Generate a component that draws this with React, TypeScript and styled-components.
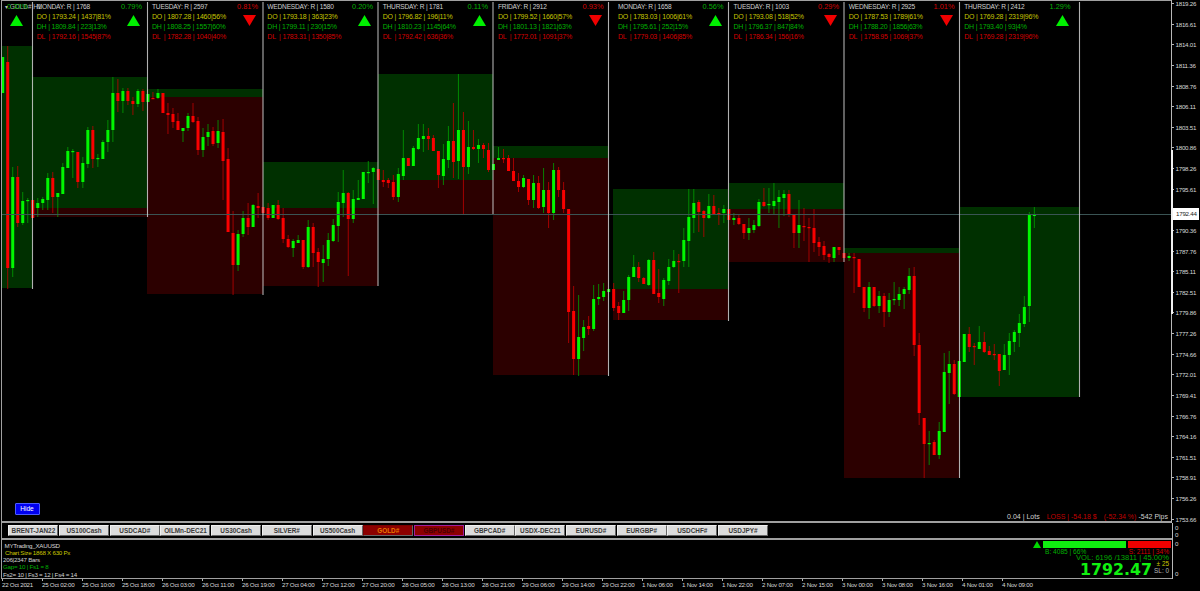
import React from 'react';
import styled, { createGlobalStyle } from 'styled-components';

type Bar = [string, number, number, number, number]; // dir, high, bodyTop, bodyBottom, low

const GlobalStyle = createGlobalStyle`
  html, body {
    margin: 0;
    padding: 0;
    background: #000;
    overflow: hidden;
  }
`;

const Root = styled.div`
  width: 1200px;
  height: 591px;
  background: #000;
  display: flex;
  flex-direction: column;
  color: #ddd;
  font-family: 'Liberation Sans', Arial, sans-serif;
  font-size: 6.2px;
  letter-spacing: -0.25px;
`;

const Pane = styled.div<{ $h: number }>`
  display: flex;
  height: ${(p) => p.$h}px;
  flex: none;
`;

const PaneBody = styled.div<{ $bottom?: number }>`
  flex: 1;
  margin-left: 1px;
  border-left: 1px solid #a0a0a0;
  border-bottom: ${(p) => p.$bottom ?? 2}px solid #a0a0a0;
  min-width: 0;
`;

const ChartBody = styled(PaneBody)`
  position: relative;
  border-top: 1px solid #a0a0a0;
`;

const PriceAxis = styled.div`
  width: 28px;
  flex: none;
  border-left: 1px solid #b8b8b8;
  display: flex;
  flex-direction: column;
  justify-content: space-between;
  position: relative;
`;

const Tick = styled.div`
  position: relative;
  height: 7px;
  line-height: 7px;
  padding-left: 3.5px;
  color: #d8d8d8;
  white-space: nowrap;
  &::before {
    content: '';
    position: absolute;
    left: 0;
    top: 3px;
    width: 2px;
    height: 1px;
    background: #b8b8b8;
  }
`;

const ScrollMark = styled.div`
  position: absolute;
  left: -1px;
  top: 150px;
  width: 2px;
  height: 164px;
  background: #f0f0f0;
`;

const BidLabel = styled.div`
  position: absolute;
  left: 1px;
  top: 208px;
  width: 26px;
  height: 12px;
  line-height: 12px;
  padding-left: 3px;
  box-sizing: border-box;
  background: #fff;
  color: #222;
`;

const ChartSvg = styled.svg`
  display: block;
`;

const HeaderRow = styled.div`
  position: absolute;
  left: 30px;
  top: 0;
  display: flex;
`;

const DayInfo = styled.div<{ $w: number; $pl?: number; $pr?: number }>`
  width: ${(p) => p.$w}px;
  box-sizing: border-box;
  padding-left: ${(p) => p.$pl ?? 5}px;
  padding-right: ${(p) => p.$pr ?? 5}px;
  display: flex;
  justify-content: space-between;
`;

const DayLines = styled.div`
  display: flex;
  flex-direction: column;
`;

const DayTitle = styled.div`
  font-size: 6.6px;
  letter-spacing: -0.2px;
  line-height: 11px;
  color: #d0d0d0;
  white-space: pre;
`;

const DayLine = styled.div<{ $tone: 'o' | 'h' | 'l' }>`
  font-size: 7px;
  letter-spacing: -0.2px;
  line-height: ${(p) => (p.$tone === 'l' ? 9 : 10)}px;
  white-space: pre;
  color: ${(p) => (p.$tone === 'o' ? '#c4c400' : p.$tone === 'h' ? '#00b000' : '#d40000')};
`;

const DaySide = styled.div`
  display: flex;
  flex-direction: column;
  align-items: flex-end;
`;

const Pct = styled.div<{ $up: boolean }>`
  font-size: 7.4px;
  letter-spacing: 0;
  line-height: 12px;
  color: ${(p) => (p.$up ? '#00b000' : '#d40000')};
`;

const ArrowSvg = styled.svg`
  display: block;
  margin-top: 2px;
  margin-right: 2px;
`;

const SymbolTag = styled.div`
  position: absolute;
  left: 3px;
  top: 1px;
  font-size: 6.4px;
  letter-spacing: 0;
  line-height: 10px;
  color: #bbb;
  white-space: pre;
`;

const FirstDay = styled.div`
  position: absolute;
  left: 5px;
  top: 0;
  display: flex;
  flex-direction: column;
  align-items: center;
`;

const HideButton = styled.button`
  position: absolute;
  left: 12.5px;
  top: 501.5px;
  width: 25px;
  height: 12.5px;
  padding: 0;
  background: #0000f0;
  border: 1px solid #4a5cff;
  border-radius: 1px;
  color: #fff;
  font-family: inherit;
  font-size: 6.6px;
  line-height: 9px;
`;

const TradeLine = styled.div`
  position: absolute;
  right: 3px;
  bottom: 0;
  display: flex;
  line-height: 9px;
  font-size: 7px;
  letter-spacing: 0;
  white-space: pre;
`;

const TradePart = styled.span<{ $loss?: boolean; $ml?: number }>`
  color: ${(p) => (p.$loss ? '#c00000' : '#d0d0d0')};
  margin-left: ${(p) => p.$ml ?? 0}px;
`;

const SymbolStrip = styled(PaneBody)`
  display: flex;
  align-items: center;
  gap: 0.7px;
  padding-left: 6.4px;
`;

const SymbolButton = styled.div<{ $kind?: 'active' | 'picked' }>`
  width: 50px;
  height: 11px;
  box-sizing: border-box;
  flex: none;
  text-align: center;
  font-size: 6.4px;
  letter-spacing: 0;
  font-weight: bold;
  line-height: 9.5px;
  white-space: nowrap;
  background: ${(p) => (p.$kind ? '#8c0000' : '#dcdcdc')};
  color: ${(p) => (p.$kind === 'active' ? '#e87800' : p.$kind === 'picked' ? '#4a0000' : '#3a3a3a')};
  border: 1px solid ${(p) => (p.$kind === 'picked' ? '#a0209a' : p.$kind ? '#7a0000' : '#f0f0f0')};
  border-right-color: ${(p) => (p.$kind === 'picked' ? '#a0209a' : '#666')};
  border-bottom-color: ${(p) => (p.$kind === 'picked' ? '#a0209a' : '#666')};
`;

const IndicatorBody = styled(PaneBody)`
  display: flex;
  justify-content: space-between;
  padding-right: 1px;
`;

const InfoColumn = styled.div`
  display: flex;
  flex-direction: column;
  padding-top: 1.5px;
  line-height: 7.3px;
`;

const InfoLine = styled.div<{ $c: string; $ml: number }>`
  color: ${(p) => p.$c};
  margin-left: ${(p) => p.$ml}px;
  white-space: pre;
`;

const Meter = styled.div`
  width: 138px;
  display: flex;
  flex-direction: column;
  padding-top: 0.5px;
  letter-spacing: 0;
`;

const MeterBars = styled.div`
  display: flex;
  align-items: center;
  height: 8px;
`;

const MeterFill = styled.div<{ $c: string; $w: number; $ml: number }>`
  width: ${(p) => p.$w}px;
  height: 6.5px;
  margin-left: ${(p) => p.$ml}px;
  background: ${(p) => p.$c};
`;

const MeterArrow = styled.svg`
  display: block;
  flex: none;
`;

const MeterCounts = styled.div`
  display: flex;
  justify-content: space-between;
  padding: 0 2px 0 12px;
  font-size: 6.6px;
  line-height: 5.5px;
`;

const CountText = styled.span<{ $sell?: boolean }>`
  color: ${(p) => (p.$sell ? '#d00000' : '#00b000')};
`;

const VolLine = styled.div`
  text-align: right;
  padding-right: 2px;
  line-height: 7px;
  font-size: 7.6px;
  color: #00a800;
`;

const QuoteRow = styled.div`
  display: flex;
  justify-content: flex-end;
  align-items: flex-start;
  padding-right: 2px;
  gap: 2px;
`;

const BigPrice = styled.div`
  font-family: 'DejaVu Sans', 'Liberation Sans', sans-serif;
  font-size: 15.8px;
  font-weight: bold;
  line-height: 17px;
  color: #10f010;
`;

const QuoteSide = styled.div`
  display: flex;
  flex-direction: column;
  font-size: 6.4px;
  line-height: 6.5px;
  align-items: flex-end;
`;

const Spread = styled.span`
  color: #c8c800;
`;

const StopLoss = styled.span`
  color: #b8b8b8;
`;

const ZeroStack = styled.div<{ $justify?: string }>`
  width: 28px;
  flex: none;
  box-sizing: border-box;
  border-left: 1px solid #b8b8b8;
  padding: 0 0 2px 2px;
  color: #d8d8d8;
  line-height: 7px;
  display: flex;
  flex-direction: column;
  justify-content: ${(p) => p.$justify ?? 'center'};
`;

const TimeAxis = styled.div`
  display: flex;
  padding-left: 2px;
  height: 12px;
`;

const TimeLabel = styled.div`
  width: 40px;
  flex: none;
  position: relative;
  line-height: 10px;
  padding-top: 1px;
  color: #d8d8d8;
  white-space: nowrap;
  &::before {
    content: '';
    position: absolute;
    left: 0;
    top: 0;
    width: 1px;
    height: 2px;
    background: #b8b8b8;
  }
`;

const prices = [
  '1819.26', '1816.61', '1814.01', '1811.36', '1808.76', '1806.11', '1803.51', '1800.86', '1798.26',
  '1795.61', '1793.01', '1790.36', '1787.76', '1785.11', '1782.51', '1779.86', '1777.26', '1774.66',
  '1772.01', '1769.41', '1766.76', '1764.16', '1761.51', '1758.91', '1756.26', '1753.66',
];

const times = [
  '22 Oct 2021', '25 Oct 02:00', '25 Oct 10:00', '25 Oct 18:00', '26 Oct 03:00', '26 Oct 11:00', '26 Oct 19:00',
  '27 Oct 04:00', '27 Oct 12:00', '27 Oct 20:00', '28 Oct 05:00', '28 Oct 13:00', '28 Oct 21:00', '29 Oct 06:00',
  '29 Oct 14:00', '29 Oct 22:00', '1 Nov 06:00', '1 Nov 14:00', '1 Nov 22:00', '2 Nov 07:00', '2 Nov 15:00',
  '3 Nov 00:00', '3 Nov 08:00', '3 Nov 16:00', '4 Nov 01:00', '4 Nov 09:00',
];

const symbols: { name: string; kind?: 'active' | 'picked' }[] = [
  { name: 'BRENT-JAN22' }, { name: 'US100Cash' }, { name: 'USDCAD#' }, { name: 'OILMn-DEC21' }, { name: 'US30Cash' },
  { name: 'SILVER#' }, { name: 'US500Cash' }, { name: 'GOLD#', kind: 'active' }, { name: 'GBPUSD#', kind: 'picked' },
  { name: 'GBPCAD#' }, { name: 'USDX-DEC21' }, { name: 'EURUSD#' }, { name: 'EURGBP#' }, { name: 'USDCHF#' }, { name: 'USDJPY#' },
];

const days = [
  { w: 115, pl: 4.7, title: 'MONDAY: R | 1768', pct: '0.79%', up: true, o: '1793.24 | 1437|81%', h: '1809.84 | 223|13%', l: '1792.16 | 1545|87%' },
  { w: 116, title: 'TUESDAY: R | 2597', pct: '0.81%', up: false, o: '1807.28 | 1460|56%', h: '1808.25 | 1557|60%', l: '1782.28 | 1040|40%' },
  { w: 115, pl: 4.3, title: 'WEDNESDAY: R | 1580', pct: '0.20%', up: true, o: '1793.18 | 363|23%', h: '1799.11 | 230|15%', l: '1783.31 | 1350|85%' },
  { w: 115, pl: 4.7, title: 'THURSDAY: R | 1781', pct: '0.11%', up: true, o: '1796.82 | 196|11%', h: '1810.23 | 1145|64%', l: '1792.42 | 636|36%' },
  { w: 115.5, title: 'FRIDAY: R | 2912', pct: '0.93%', up: false, o: '1799.52 | 1660|57%', h: '1801.13 | 1821|63%', l: '1772.01 | 1091|37%' },
  { w: 120, pl: 9.5, title: 'MONDAY: R | 1658', pct: '0.56%', up: true, o: '1783.03 | 1006|61%', h: '1795.61 | 252|15%', l: '1779.03 | 1406|85%' },
  { w: 115.5, title: 'TUESDAY: R | 1003', pct: '0.29%', up: false, o: '1793.08 | 518|52%', h: '1796.37 | 847|84%', l: '1786.34 | 156|16%' },
  { w: 115.5, pl: 4.7, title: 'WEDNESDAY: R | 2925', pct: '1.01%', up: false, o: '1787.53 | 1789|61%', h: '1788.20 | 1856|63%', l: '1758.95 | 1069|37%' },
  { w: 120, pl: 4.7, pr: 9, title: 'THURSDAY: R | 2412', pct: '1.29%', up: true, o: '1769.28 | 2319|96%', h: '1793.40 | 93|4%', l: '1769.28 | 2319|96%' },
];

// x0, x1, green top, split, red bottom
const ranges = [
  [2, 32, 46, 288, 288],
  [32, 147, 77, 208, 217],
  [147, 263, 89, 97, 294],
  [263, 378, 162, 208, 286],
  [378, 493, 74, 180, 214],
  [493, 608, 146, 158, 375],
  [613, 728, 189, 289, 320],
  [729, 844, 183, 209, 262],
  [844, 959, 248, 253, 478],
  [960, 1079, 207, 397, 397],
];

// x, bottom of the white session line
const sessionLines = [
  [32.5, 289], [147.5, 217], [263, 295], [378, 286], [493, 214], [608.5, 376], [728.5, 321], [844, 262], [959.5, 478], [1079.5, 397],
];

const bars: Bar[] = [
  ['g',57,57,93,93],['r',46,62,268,289],['g',167,177,268,277],['r',166,177,223,227],['g',192,201,223,225],
  ['g',198,200,201,223],['r',200,200,218,218],['g',198,203,208,217],['g',197,199,203,210],['g',173,178,200,210],
  ['r',172,178,197,213],['g',193,193,197,217],['g',163,167,194,194],['g',147,151,168,168],['g',149,151,152,178],
  ['r',152,152,182,188],['g',157,163,182,188],['g',127,130,164,168],['r',126,130,159,168],['g',154,158,159,167],
  ['g',140,142,159,159],['g',120,130,142,152],['g',77,93,130,142],['r',79,93,101,112],['g',88,91,101,113],
  ['r',88,91,101,105],['r',97,101,104,115],['g',89,91,104,107],['r',89,91,102,111],['g',94,94,102,102],
  ['r',92,98,99,99],['g',89,93,98,99],['r',93,93,113,113],['r',103,113,115,134],['r',108,114,122,128],
  ['r',113,121,130,130],['g',128,128,131,142],['g',113,116,128,131],['r',103,116,122,123],['r',117,121,150,155],
  ['g',128,137,150,157],['g',124,132,137,146],['r',127,131,144,146],['g',120,131,143,148],['r',119,132,161,200],
  ['r',148,159,232,232],['r',211,233,265,295],['g',230,234,265,271],['g',211,218,234,237],['r',203,218,227,235],
  ['g',204,205,227,227],['r',193,206,208,218],['r',207,207,213,213],['r',203,208,218,220],['g',205,205,218,218],
  ['r',200,205,219,220],['r',208,218,239,243],['r',235,239,247,248],['g',239,241,248,257],['g',235,240,243,243],
  ['r',240,240,267,269],['g',220,227,267,268],['r',223,227,253,267],['r',248,252,262,287],['g',245,259,263,282],
  ['g',233,240,259,266],['g',219,225,241,242],['g',192,202,226,242],['g',170,193,203,217],['r',192,193,219,276],
  ['g',190,199,219,223],['g',180,198,200,200],['g',172,172,199,199],['g',161,172,173,183],['g',167,168,172,204],
  ['r',169,169,180,180],['r',170,180,182,187],['r',178,180,183,188],['r',175,182,197,200],['g',168,174,197,202],
  ['g',130,158,176,180],['r',158,158,166,166],['g',146,148,166,166],['g',124,138,149,150],['g',124,136,139,152],
  ['r',128,136,139,150],['r',135,138,151,151],['r',151,151,175,188],['g',144,159,176,185],['g',126,141,160,168],
  ['r',103,141,162,178],['g',74,130,161,179],['r',112,130,167,214],['g',121,147,167,174],['r',130,147,149,150],
  ['g',139,145,149,163],['r',143,145,149,158],['r',143,150,170,172],['g',164,164,170,170],['g',147,158,160,160],
  ['r',149,158,159,163],['r',155,158,171,171],['r',158,171,181,181],['r',173,181,187,192],['g',175,178,187,188],
  ['r',179,179,200,205],['g',175,183,200,208],['r',176,183,208,209],['g',168,190,207,213],['r',182,190,213,228],
  ['g',163,170,213,220],['r',167,170,190,197],['r',182,190,209,213],['r',209,209,312,343],['r',286,311,359,375],
  ['g',295,337,359,376],['g',320,327,338,351],['r',316,326,329,335],['g',285,299,329,331],['g',284,297,299,305],
  ['g',283,291,297,301],['g',289,289,292,292],['r',283,289,308,311],['r',302,306,313,320],['g',291,300,313,313],
  ['g',275,277,300,311],['g',255,267,277,277],['r',262,267,278,282],['r',277,278,284,284],['g',259,260,285,286],
  ['r',252,260,294,294],['r',269,293,297,303],['g',278,280,299,306],['g',259,267,281,285],['g',250,261,267,268],
  ['r',254,261,262,293],['g',228,240,261,267],['g',189,217,241,267],['g',189,203,218,233],['r',200,202,212,232],
  ['r',210,211,218,237],['g',194,206,218,219],['r',195,206,214,215],['r',208,213,214,225],['g',205,209,213,223],
  ['r',209,209,220,220],['g',213,218,220,225],['r',215,218,224,225],['r',224,224,233,239],['g',218,228,233,240],
  ['g',220,225,230,233],['g',199,202,226,227],['r',188,202,206,207],['g',188,204,205,213],['g',183,201,206,215],
  ['g',190,197,202,228],['g',190,194,198,216],['r',190,194,215,217],['r',215,215,233,248],['g',200,225,233,248],
  ['r',208,226,227,241],['r',218,227,228,262],['r',209,228,243,252],['r',237,242,247,256],['r',241,246,255,260],
  ['r',253,254,257,263],['g',247,247,258,262],['r',247,247,250,255],['r',253,253,258,258],['g',253,256,258,261],
  ['r',253,257,258,293],['r',259,259,287,287],['r',287,287,308,312],['g',282,287,308,319],['r',287,287,306,307],
  ['g',291,296,306,313],['r',293,296,312,327],['g',293,300,312,317],['g',282,299,300,305],['g',287,294,300,306],
  ['g',287,289,294,309],['g',268,276,290,294],['r',267,276,345,356],['r',333,345,413,425],['r',418,418,444,478],
  ['g',431,443,444,465],['r',440,442,455,455],['g',422,431,455,459],['g',353,372,432,432],['g',351,364,373,404],
  ['r',360,364,394,395],['g',361,361,397,397],['g',334,334,362,362],['r',327,334,347,352],['r',343,346,347,365],
  ['g',326,342,349,349],['r',332,342,352,353],['r',346,351,355,355],['r',344,354,355,360],['r',354,354,371,386],
  ['g',344,355,370,370],['g',333,341,355,375],['g',330,332,342,352],['g',314,323,333,347],['g',296,307,324,327],
  ['g',212,215,306,322],['g',207,214,216,228],
];

const barX = (i: number) => 2.7 + 5.008 * i;

const TriangleIcon: React.FC<{ up: boolean }> = ({ up }) => (
  <ArrowSvg width="13" height="11" viewBox="0 0 13 11">
    <polygon points={up ? '6.5,0 13,11 0,11' : '0,0 13,0 6.5,11'} fill={up ? '#00f000' : '#f00000'} />
  </ArrowSvg>
);

const CandleChart: React.FC = () => (
  <ChartSvg width="1169" height="520" viewBox="2 1 1169 520">
    {ranges.map(([x0, x1, top, split, bottom], i) => (
      <g key={i}>
        <rect x={x0} y={top} width={x1 - x0} height={split - top} fill="#003000" />
        <rect x={x0} y={split} width={x1 - x0} height={bottom - split} fill="#2c0000" />
      </g>
    ))}
    {bars.map(([dir, high, top, bottom, low], i) => {
      const x = barX(i);
      const up = dir === 'g';
      return (
        <g key={i}>
          <line x1={x} x2={x} y1={high} y2={low} stroke={up ? '#00a000' : '#c00000'} strokeWidth="0.8" />
          <rect x={x - 1.5} y={top} width="3" height={Math.max(bottom - top, 1.2)} fill={up ? '#00f800' : '#fa0000'} />
        </g>
      );
    })}
    <line x1="2" x2="1171" y1="214.5" y2="214.5" stroke="#3a5454" strokeWidth="1" />
    {sessionLines.map(([x, bottom]) => (
      <line key={x} x1={x} x2={x} y1="2" y2={bottom} stroke="#d0d0d0" strokeWidth="1.1" opacity="0.85" />
    ))}
  </ChartSvg>
);

const App: React.FC = () => (
  <Root>
    <GlobalStyle />
    <Pane $h={523}>
      <ChartBody>
        <CandleChart />
        <SymbolTag>{'▾ GOLD#,H1'}</SymbolTag>
        <FirstDay>
          <Pct $up>0.33%</Pct>
          <TriangleIcon up />
        </FirstDay>
        <HeaderRow>
          {days.map((d) => (
            <DayInfo key={d.title} $w={d.w} $pl={d.pl} $pr={d.pr}>
              <DayLines>
                <DayTitle>{d.title}</DayTitle>
                <DayLine $tone="o">{`DO | ${d.o}`}</DayLine>
                <DayLine $tone="h">{`DH | ${d.h}`}</DayLine>
                <DayLine $tone="l">{`DL  | ${d.l}`}</DayLine>
              </DayLines>
              <DaySide>
                <Pct $up={d.up}>{d.pct}</Pct>
                <TriangleIcon up={d.up} />
              </DaySide>
            </DayInfo>
          ))}
        </HeaderRow>
        <HideButton>Hide</HideButton>
        <TradeLine>
          <TradePart>0.04 | Lots</TradePart>
          <TradePart $loss $ml={7}>LOSS | -54.18 $</TradePart>
          <TradePart $loss $ml={7}>(-52.34 %)</TradePart>
          <TradePart $ml={2}>-542 Pips</TradePart>
        </TradeLine>
      </ChartBody>
      <PriceAxis>
        {prices.map((p) => (
          <Tick key={p}>{p}</Tick>
        ))}
        <ScrollMark />
        <BidLabel>1792.44</BidLabel>
      </PriceAxis>
    </Pane>
    <Pane $h={17}>
      <SymbolStrip>
        {symbols.map((s) => (
          <SymbolButton key={s.name} $kind={s.kind}>{s.name}</SymbolButton>
        ))}
      </SymbolStrip>
      <ZeroStack>
        <span>0</span>
        <span>0</span>
      </ZeroStack>
    </Pane>
    <Pane $h={39}>
      <IndicatorBody $bottom={1}>
        <InfoColumn>
          <InfoLine $c="#d8d8d8" $ml={2.5}>MYTrading_XAUUSD</InfoLine>
          <InfoLine $c="#c8c800" $ml={3}>Chart Size 1868 X 630 Px</InfoLine>
          <InfoLine $c="#d0d0d0" $ml={1}>206|2347 Bars</InfoLine>
          <InfoLine $c="#00b000" $ml={1}>Gap= 10 | Fs1 = 8</InfoLine>
          <InfoLine $c="#d0d0d0" $ml={1}>Fs2= 10 | Fs3 = 12 | Fs4 = 14</InfoLine>
        </InfoColumn>
        <Meter>
          <MeterBars>
            <MeterArrow width="8" height="7" viewBox="0 0 8 7">
              <polygon points="4,0 8,7 0,7" fill="#00d800" />
            </MeterArrow>
            <MeterFill $c="#10f010" $w={83} $ml={2} />
            <MeterFill $c="#f00000" $w={43} $ml={1.5} />
          </MeterBars>
          <MeterCounts>
            <CountText>B: 4085 | 66%</CountText>
            <CountText $sell>S: 2111 | 34%</CountText>
          </MeterCounts>
          <VolLine>VOL: 6196 /13811 | 45.00%</VolLine>
          <QuoteRow>
            <BigPrice>1792.47</BigPrice>
            <QuoteSide>
              <Spread>± 25</Spread>
              <StopLoss>SL: 0</StopLoss>
            </QuoteSide>
          </QuoteRow>
        </Meter>
      </IndicatorBody>
      <ZeroStack $justify="space-between">
        <span>0</span>
        <span>0</span>
      </ZeroStack>
    </Pane>
    <TimeAxis>
      {times.map((t) => (
        <TimeLabel key={t}>{t}</TimeLabel>
      ))}
    </TimeAxis>
  </Root>
);

export default App;
